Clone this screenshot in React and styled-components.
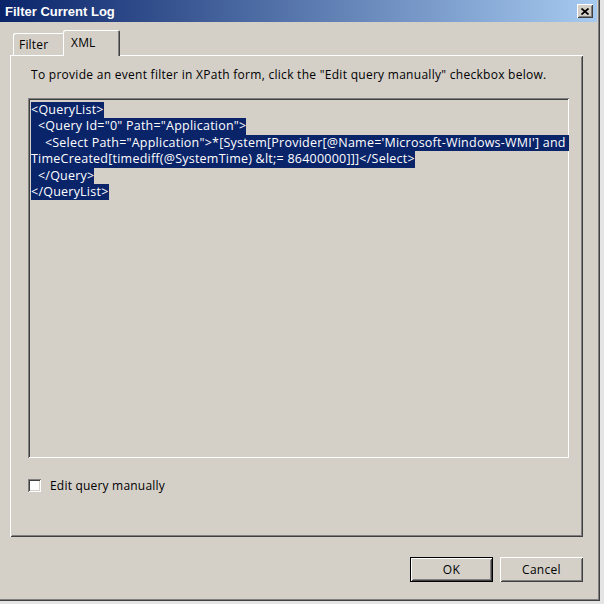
import React from "react";
import styled, { createGlobalStyle } from "styled-components";

const Global = createGlobalStyle`
  html, body { margin: 0; padding: 0; background: #e4e4e4; }
  body { font-family: "Open Sans", "Liberation Sans", sans-serif; }
`;

const raised = `
  box-shadow: inset 1px 1px #ffffff, inset -1px -1px #404040,
    inset 2px 2px #d4d0c8, inset -2px -2px #808080;
`;

const Window = styled.div`
  width: 600px;
  height: 601px;
  box-sizing: border-box;
  background: #d4d0c8;
  display: flex;
  flex-direction: column;
  box-shadow: inset -1px -1px #404040, inset -2px -2px #808080;
`;

const TitleBar = styled.div`
  height: 22px;
  margin-right: 3px;
  background: linear-gradient(to right, #0a246a, #a6caf0);
  display: flex;
  align-items: center;
  justify-content: space-between;
  padding: 0 4px 0 5px;
`;

const Title = styled.span`
  font-family: "Liberation Sans", Arial, sans-serif;
  font-weight: bold;
  font-size: 13px;
  color: #ffffff;
`;

const CloseButton = styled.div`
  width: 16px;
  height: 14px;
  background: #d4d0c8;
  ${raised}
  display: flex;
  align-items: center;
  justify-content: center;
`;

const Content = styled.div`
  flex: 1;
  padding: 8px 17px 0 10px;
  display: flex;
  flex-direction: column;
`;

const TabStrip = styled.div`
  height: 25px;
  display: flex;
  align-items: flex-end;
  padding-left: 3px;
`;

const Tab = styled.div`
  position: relative;
  z-index: ${(p) => (p.$active ? 2 : 1)};
  width: ${(p) => p.$w}px;
  height: ${(p) => (p.$active ? 26 : 22)}px;
  margin: 0 0 ${(p) => (p.$active ? -1 : 0)}px ${(p) => (p.$active ? -2 : 0)}px;
  box-sizing: border-box;
  padding: 0 0 ${(p) => (p.$active ? 2 : 0)}px ${(p) => (p.$active ? 8 : 6)}px;
  background: #d4d0c8;
  border-radius: 2px 2px 0 0;
  box-shadow: inset 1px 1px #ffffff, inset -1px 0 #404040, inset -2px 0 #808080;
  display: flex;
  align-items: center;
  font-size: 12px;
  letter-spacing: 0.2px;
  color: #000;
`;

const Panel = styled.div`
  height: 482px;
  box-sizing: border-box;
  padding: 12px 14px 0 18px;
  ${raised}
  display: flex;
  flex-direction: column;
`;

const Description = styled.div`
  margin: 0 0 15px 3px;
  font-size: 12px;
  letter-spacing: 0.28px;
  line-height: 16px;
  height: 16px;
  color: #000;
  white-space: nowrap;
`;

const XmlBox = styled.div`
  height: 360px;
  box-sizing: border-box;
  padding: 4px 3px;
  background: #d4d0c8;
  box-shadow: inset 1px 1px #808080, inset -1px -1px #ffffff,
    inset 2px 2px #404040, inset -2px -2px #d4d0c8;
  overflow: hidden;
`;

const XmlLine = styled.div`
  height: 16.4px;
  line-height: 16.4px;
  font-size: 12.5px;
  letter-spacing: 0.23px;
  white-space: pre;
`;

const Selected = styled.span`
  display: inline-block;
  height: 16.4px;
  background: #0a246a;
  color: #ffffff;
`;

const CheckRow = styled.label`
  margin-top: 20px;
  height: 14px;
  display: flex;
  align-items: center;
  gap: 9px;
  font-size: 12px;
  letter-spacing: 0.2px;
  color: #000;
`;

const CheckBox = styled.span`
  width: 13px;
  height: 13px;
  background: #ffffff;
  box-shadow: inset 1px 1px #808080, inset -1px -1px #ffffff,
    inset 2px 2px #404040, inset -2px -2px #d4d0c8;
`;

const Footer = styled.div`
  margin-top: 20px;
  display: flex;
  justify-content: flex-end;
  gap: 7px;
`;

const Button = styled.div`
  width: 83px;
  height: 25px;
  box-sizing: border-box;
  display: flex;
  align-items: center;
  justify-content: center;
  font-size: 12px;
  letter-spacing: 0.3px;
  color: #000;
  background: #d4d0c8;
  ${(p) =>
    p.$default
      ? `border: 1px solid #000;
         box-shadow: inset 1px 1px #ffffff, inset -1px -1px #404040,
           inset 2px 2px #d4d0c8, inset -2px -2px #808080;`
      : raised}
`;

const lines = [
  "<QueryList>",
  '  <Query Id="0" Path="Application">',
  "    <Select Path=\"Application\">*[System[Provider[@Name='Microsoft-Windows-WMI'] and ",
  "TimeCreated[timediff(@SystemTime) &lt;= 86400000]]]</Select>",
  "  </Query>",
  "</QueryList>",
];

export default function App() {
  return (
    <>
      <Global />
      <Window>
        <TitleBar>
          <Title>Filter Current Log</Title>
          <CloseButton>
            <svg width="8" height="7" viewBox="0 0 8 7">
              <path d="M0.5 0.5 L7.5 6.5 M7.5 0.5 L0.5 6.5" stroke="#000" strokeWidth="1.7" />
            </svg>
          </CloseButton>
        </TitleBar>
        <Content>
          <TabStrip>
            <Tab $w={52}>Filter</Tab>
            <Tab $w={57} $active>XML</Tab>
          </TabStrip>
          <Panel>
            <Description>
              To provide an event filter in XPath form, click the "Edit query manually" checkbox below.
            </Description>
            <XmlBox>
              {lines.map((l, i) => (
                <XmlLine key={i}>
                  <Selected>{l}</Selected>
                </XmlLine>
              ))}
            </XmlBox>
            <CheckRow>
              <CheckBox />
              Edit query manually
            </CheckRow>
          </Panel>
          <Footer>
            <Button $default>OK</Button>
            <Button>Cancel</Button>
          </Footer>
        </Content>
      </Window>
    </>
  );
}
